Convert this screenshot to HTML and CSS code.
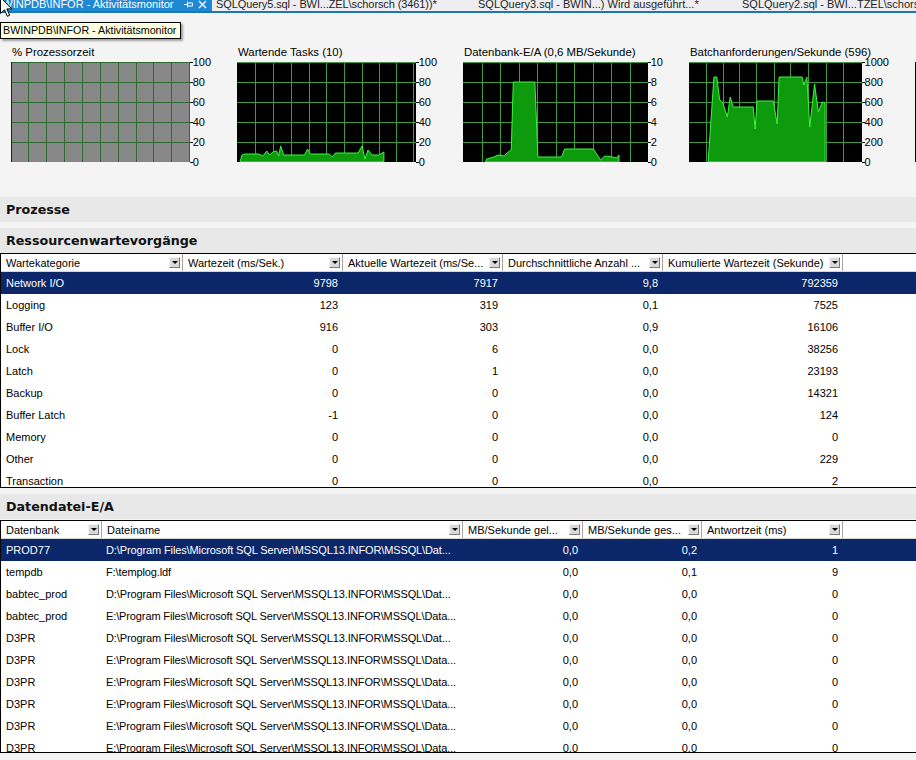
FILE: index.html
```html
<!DOCTYPE html>
<html lang="de">
<head>
<meta charset="utf-8">
<title>Aktivitätsmonitor</title>
<link rel="stylesheet" href="styles.css">
</head>
<body>
<div class="tabbar">
  <div class="tabs">
    <div class="tab tab-active">
      <span class="tab-title">BWINPDB\INFOR - Aktivitätsmonitor</span>
      <svg class="ico-pin" width="9" height="9" viewBox="0 0 9 9"><path d="M0 4.5H3M3.5 1.5V7.5M3.5 3H8.5V6H3.5" fill="none" stroke="#fff" stroke-width="1"/></svg>
      <svg class="ico-close" width="9" height="9" viewBox="0 0 9 9"><path d="M1 1L8 8M8 1L1 8" stroke="#fff" stroke-width="1.4"/></svg>
    </div>
    <div class="tab tab-2">SQLQuery5.sql - BWI...ZEL\schorsch (3461))*</div>
    <div class="tab tab-3">SQLQuery3.sql - BWIN...) Wird ausgeführt...*</div>
    <div class="tab tab-4">SQLQuery2.sql - BWI...TZEL\schorsch (3462))*</div>
  </div>
</div>

<div class="charts">
  <div class="chart">
    <div class="chart-title">% Prozessorzeit</div>
    <div class="chart-body">
      <svg class="plot plot-gray" viewBox="0 0 180 100" preserveAspectRatio="none">
        <path class="grid grid-gray" d="M0 0.5H180M0 20.5H180M0 40.5H180M0 60.5H180M0 80.5H180M18 0V100M36 0V100M54 0V100M72 0V100M90 0V100M108 0V100M126 0V100M144 0V100M162 0V100M179.5 0V100"/>
        <path class="edge" d="M0.5 0V100"/>
      </svg>
      <div class="axis"><span>100</span><span>80</span><span>60</span><span>40</span><span>20</span><span>0</span></div>
    </div>
  </div>
  <div class="chart">
    <div class="chart-title">Wartende Tasks (10)</div>
    <div class="chart-body">
      <svg class="plot plot-dark" viewBox="0 0 180 100" preserveAspectRatio="none">
        <path class="grid grid-dark" d="M0 0.5H180M0 20.5H180M0 40.5H180M0 60.5H180M0 80.5H180M19 0V100M37 0V100M55 0V100M73 0V100M90 0V100M108 0V100M126 0V100M144 0V100M161 0V100M178 0V100"/>
        <polygon class="area" points="3,100 5,93 8,92 22,92 26,94 30,89 33,93 36,90 40,89 42,94 44,84 47,93 68,93 71,87 74,92 93,92 96,95 99,91 122,91 126,84 129,97 132,88 136,93 143,93 148,90 148,100"/>
      </svg>
      <div class="axis"><span>100</span><span>80</span><span>60</span><span>40</span><span>20</span><span>0</span></div>
    </div>
  </div>
  <div class="chart">
    <div class="chart-title">Datenbank-E/A (0,6 MB/Sekunde)</div>
    <div class="chart-body">
      <svg class="plot plot-dark" viewBox="0 0 180 100" preserveAspectRatio="none">
        <path class="grid grid-dark" d="M0 0.5H180M0 20.5H180M0 40.5H180M0 60.5H180M0 80.5H180M19 0V100M37 0V100M55 0V100M73 0V100M91 0V100M109 0V100M127 0V100M145 0V100M163 0V100"/>
        <polygon class="area" points="22,100 23,97 30,95 34,93 40,94 44,90 47,88 49,20 70,20 73,95 96,95 99,87 127,87 134,98 138,94 146,95 150,96 152,93 152,100"/>
      </svg>
      <div class="axis"><span>10</span><span>8</span><span>6</span><span>4</span><span>2</span><span>0</span></div>
    </div>
  </div>
  <div class="chart">
    <div class="chart-title">Batchanforderungen/Sekunde (596)</div>
    <div class="chart-body">
      <svg class="plot plot-dark" viewBox="0 0 180 100" preserveAspectRatio="none">
        <path class="grid grid-dark" d="M0 0.5H180M0 20.5H180M0 40.5H180M0 60.5H180M0 80.5H180M18 0V100M36 0V100M53 0V100M70 0V100M89 0V100M106 0V100M125 0V100M143 0V100M161 0V100"/>
        <polygon class="area" points="20,100 26,15 29,15 32,38 35,40 40,55 43,35 46,45 67,45 69,67 71,39 88,39 92,62 94,15 118,15 120,23 123,15 126,65 131,22 135,50 139,40 142,41 142,100"/>
      </svg>
      <div class="axis"><span>1000</span><span>800</span><span>600</span><span>400</span><span>200</span><span>0</span></div>
    </div>
  </div>
  <div class="chart">
    <div class="chart-title">&nbsp;</div>
    <div class="chart-body">
      <svg class="plot plot-dark" viewBox="0 0 180 100" preserveAspectRatio="none"></svg>
    </div>
  </div>
</div>

<div class="band band-first">Prozesse</div>
<div class="band">Ressourcenwartevorgänge</div>
<div class="grid-box box-waits">
  <div class="ghead">
    <div class="hc w1"><span class="hl">Wartekategorie</span><span class="dd"></span></div>
    <div class="hc w2"><span class="hl">Wartezeit (ms/Sek.)</span><span class="dd"></span></div>
    <div class="hc w3"><span class="hl">Aktuelle Wartezeit (ms/Se...</span><span class="dd"></span></div>
    <div class="hc w4"><span class="hl">Durchschnittliche Anzahl ...</span><span class="dd"></span></div>
    <div class="hc w5"><span class="hl">Kumulierte Wartezeit (Sekunde)</span><span class="dd"></span></div>
  </div>
  <div class="row sel"><div class="c w1">Network I/O</div><div class="c w2 n">9798</div><div class="c w3 n">7917</div><div class="c w4 n">9,8</div><div class="c w5 n">792359</div></div>
  <div class="row"><div class="c w1">Logging</div><div class="c w2 n">123</div><div class="c w3 n">319</div><div class="c w4 n">0,1</div><div class="c w5 n">7525</div></div>
  <div class="row"><div class="c w1">Buffer I/O</div><div class="c w2 n">916</div><div class="c w3 n">303</div><div class="c w4 n">0,9</div><div class="c w5 n">16106</div></div>
  <div class="row"><div class="c w1">Lock</div><div class="c w2 n">0</div><div class="c w3 n">6</div><div class="c w4 n">0,0</div><div class="c w5 n">38256</div></div>
  <div class="row"><div class="c w1">Latch</div><div class="c w2 n">0</div><div class="c w3 n">1</div><div class="c w4 n">0,0</div><div class="c w5 n">23193</div></div>
  <div class="row"><div class="c w1">Backup</div><div class="c w2 n">0</div><div class="c w3 n">0</div><div class="c w4 n">0,0</div><div class="c w5 n">14321</div></div>
  <div class="row"><div class="c w1">Buffer Latch</div><div class="c w2 n">-1</div><div class="c w3 n">0</div><div class="c w4 n">0,0</div><div class="c w5 n">124</div></div>
  <div class="row"><div class="c w1">Memory</div><div class="c w2 n">0</div><div class="c w3 n">0</div><div class="c w4 n">0,0</div><div class="c w5 n">0</div></div>
  <div class="row"><div class="c w1">Other</div><div class="c w2 n">0</div><div class="c w3 n">0</div><div class="c w4 n">0,0</div><div class="c w5 n">229</div></div>
  <div class="row"><div class="c w1">Transaction</div><div class="c w2 n">0</div><div class="c w3 n">0</div><div class="c w4 n">0,0</div><div class="c w5 n">2</div></div>
</div>

<div class="band band-gap">Datendatei-E/A</div>
<div class="grid-box box-files">
  <div class="ghead">
    <div class="hc f1"><span class="hl">Datenbank</span><span class="dd"></span></div>
    <div class="hc f2"><span class="hl">Dateiname</span><span class="dd"></span></div>
    <div class="hc f3"><span class="hl">MB/Sekunde gel...</span><span class="dd"></span></div>
    <div class="hc f4"><span class="hl">MB/Sekunde ges...</span><span class="dd"></span></div>
    <div class="hc f5"><span class="hl">Antwortzeit (ms)</span><span class="dd"></span></div>
  </div>
  <div class="row sel"><div class="c f1">PROD77</div><div class="c f2 path">D:\Program Files\Microsoft SQL Server\MSSQL13.INFOR\MSSQL\Dat...</div><div class="c f3 n">0,0</div><div class="c f4 n">0,2</div><div class="c f5 n">1</div></div>
  <div class="row"><div class="c f1">tempdb</div><div class="c f2 path">F:\templog.ldf</div><div class="c f3 n">0,0</div><div class="c f4 n">0,1</div><div class="c f5 n">9</div></div>
  <div class="row"><div class="c f1">babtec_prod</div><div class="c f2 path">D:\Program Files\Microsoft SQL Server\MSSQL13.INFOR\MSSQL\Dat...</div><div class="c f3 n">0,0</div><div class="c f4 n">0,0</div><div class="c f5 n">0</div></div>
  <div class="row"><div class="c f1">babtec_prod</div><div class="c f2 path">E:\Program Files\Microsoft SQL Server\MSSQL13.INFOR\MSSQL\Data...</div><div class="c f3 n">0,0</div><div class="c f4 n">0,0</div><div class="c f5 n">0</div></div>
  <div class="row"><div class="c f1">D3PR</div><div class="c f2 path">D:\Program Files\Microsoft SQL Server\MSSQL13.INFOR\MSSQL\Dat...</div><div class="c f3 n">0,0</div><div class="c f4 n">0,0</div><div class="c f5 n">0</div></div>
  <div class="row"><div class="c f1">D3PR</div><div class="c f2 path">E:\Program Files\Microsoft SQL Server\MSSQL13.INFOR\MSSQL\Data...</div><div class="c f3 n">0,0</div><div class="c f4 n">0,0</div><div class="c f5 n">0</div></div>
  <div class="row"><div class="c f1">D3PR</div><div class="c f2 path">E:\Program Files\Microsoft SQL Server\MSSQL13.INFOR\MSSQL\Data...</div><div class="c f3 n">0,0</div><div class="c f4 n">0,0</div><div class="c f5 n">0</div></div>
  <div class="row"><div class="c f1">D3PR</div><div class="c f2 path">E:\Program Files\Microsoft SQL Server\MSSQL13.INFOR\MSSQL\Data...</div><div class="c f3 n">0,0</div><div class="c f4 n">0,0</div><div class="c f5 n">0</div></div>
  <div class="row"><div class="c f1">D3PR</div><div class="c f2 path">E:\Program Files\Microsoft SQL Server\MSSQL13.INFOR\MSSQL\Data...</div><div class="c f3 n">0,0</div><div class="c f4 n">0,0</div><div class="c f5 n">0</div></div>
  <div class="row"><div class="c f1">D3PR</div><div class="c f2 path">E:\Program Files\Microsoft SQL Server\MSSQL13.INFOR\MSSQL\Data...</div><div class="c f3 n">0,0</div><div class="c f4 n">0,0</div><div class="c f5 n">0</div></div>
</div>

<div class="tooltip">BWINPDB\INFOR - Aktivitätsmonitor</div>
<svg class="cursor" width="13" height="21" viewBox="0 0 13 21"><path d="M0.5 0.5V16.5L4.5 12.8L7.3 19.3L9.6 18.3L6.9 11.9H12Z" fill="#fff" stroke="#000" stroke-width="1"/></svg>
</body>
</html>
```

FILE: styles.css
```css
html, body {
  margin: 0;
  padding: 0;
}
body {
  width: 916px;
  height: 760px;
  overflow: hidden;
  position: relative;
  background: #f4f4f4;
  font-family: "Liberation Sans", Arial, sans-serif;
  font-size: 11px;
  color: #000;
}

/* ---------- tab strip ---------- */
.tabbar {
  height: 11px;
  overflow: hidden;
  background: #eeeef2;
  border-bottom: 2px solid #1c76b4;
}
.tabs {
  display: flex;
  margin-top: -2px;
  line-height: 13px;
  white-space: nowrap;
}
.tab {
  flex: 0 0 auto;
  box-sizing: border-box;
  height: 13px;
  padding-left: 4px;
  color: #1e1e1e;
  overflow: hidden;
}
.tab-active {
  width: 212px;
  padding: 0 5px 0 0;
  display: flex;
  align-items: center;
  background: #1e88d3;
  color: #fff;
}
.tab-title {
  margin-left: -5px;
}
.ico-pin {
  margin-left: auto;
  margin-right: 5px;
}
.tab-2 { width: 262px; letter-spacing: -0.1px; }
.tab-3 { width: 264px; }
.tab-4 { width: 200px; }

/* ---------- charts ---------- */
.charts {
  height: 184px;
  box-sizing: border-box;
  padding: 33px 0 0 11px;
  display: flex;
  overflow: hidden;
}
.chart {
  flex: 0 0 226px;
}
.chart-title {
  height: 13px;
  line-height: 13px;
  margin: 0 0 3px 1px;
  font-size: 11.4px;
  white-space: nowrap;
}
.chart-body {
  display: flex;
  align-items: flex-start;
}
.plot {
  display: block;
  flex: 1 1 0;
  width: 0;
  height: 100px;
}
.plot-gray { background: #878787; }
.plot-dark { background: #000; }
.grid {
  fill: none;
  stroke-width: 1;
  vector-effect: non-scaling-stroke;
  shape-rendering: crispEdges;
}
.grid-gray { stroke: #2f6a33; }
.grid-dark { stroke: #3f9a3f; }
.edge {
  fill: none;
  stroke: #222;
  stroke-width: 1;
  vector-effect: non-scaling-stroke;
  shape-rendering: crispEdges;
}
.area {
  fill: #0d9a0d;
  stroke: #3cf53c;
  stroke-width: 1;
  stroke-linejoin: round;
  vector-effect: non-scaling-stroke;
}
.axis {
  flex: none;
  height: 112px;
  margin: -6px 0;
  padding-right: 26px;
  display: flex;
  flex-direction: column;
  justify-content: space-between;
  line-height: 12px;
}
.axis span {
  display: flex;
  align-items: center;
}
.axis span::before {
  content: "";
  width: 3px;
  height: 1px;
  background: #000;
}

/* ---------- section bands ---------- */
.band {
  height: 25px;
  line-height: 25px;
  padding-left: 6px;
  background: #e8e8e8;
  font-family: "DejaVu Sans", Verdana, sans-serif;
  font-weight: bold;
  font-size: 12.7px;
  color: #111;
}
.band-first {
  margin-bottom: 6px;
}
.band-gap {
  margin-top: 6px;
}

/* ---------- grids ---------- */
.grid-box {
  background: #fff;
  border: 1px solid #000;
  border-right: none;
  overflow: hidden;
}
.box-waits { height: 233px; }
.box-files { height: 231px; margin-top: 1px; }

.ghead {
  display: flex;
  height: 17px;
  border-bottom: 1px solid #d6d6d6;
}
.hc {
  display: flex;
  align-items: center;
  box-sizing: border-box;
  padding: 0 2px 0 5px;
  border-right: 1px solid #a6a6a6;
  white-space: nowrap;
  overflow: hidden;
}
.hl {
  flex: 1 1 auto;
  overflow: hidden;
}
.dd {
  flex: none;
  width: 11px;
  height: 11px;
  box-sizing: border-box;
  border: 1px solid;
  border-color: #f4f4f4 #7a7a7a #7a7a7a #f4f4f4;
  background: #d9d9d9;
  display: flex;
  align-items: center;
  justify-content: center;
}
.dd::after {
  content: "";
  border-left: 3px solid transparent;
  border-right: 3px solid transparent;
  border-top: 3px solid #000;
}

.row {
  display: flex;
  height: 22px;
  line-height: 22px;
}
.row.sel {
  background: #0b276a;
  color: #fff;
}
.c {
  box-sizing: border-box;
  padding: 0 5px;
  white-space: nowrap;
  overflow: hidden;
}
.n {
  text-align: right;
}
.path {
  padding-left: 4px;
  letter-spacing: -0.12px;
}

.w1 { width: 182px; }
.w2 { width: 160px; }
.w3 { width: 160px; }
.w4 { width: 160px; }
.w5 { width: 180px; }

.f1 { width: 101px; }
.f2 { width: 361px; }
.f3 { width: 120px; }
.f4 { width: 119px; }
.f5 { width: 141px; }

/* ---------- overlays ---------- */
.tooltip {
  position: absolute;
  left: 0;
  top: 22px;
  width: 181px;
  height: 17px;
  box-sizing: border-box;
  border: 1px solid #000;
  background: #ffffe1;
  padding-left: 2px;
  line-height: 15px;
  font-size: 10.7px;
  white-space: nowrap;
  box-shadow: 2px 2px 2px rgba(0, 0, 0, 0.35);
}
.cursor {
  position: absolute;
  left: 0;
  top: -3px;
}
```
